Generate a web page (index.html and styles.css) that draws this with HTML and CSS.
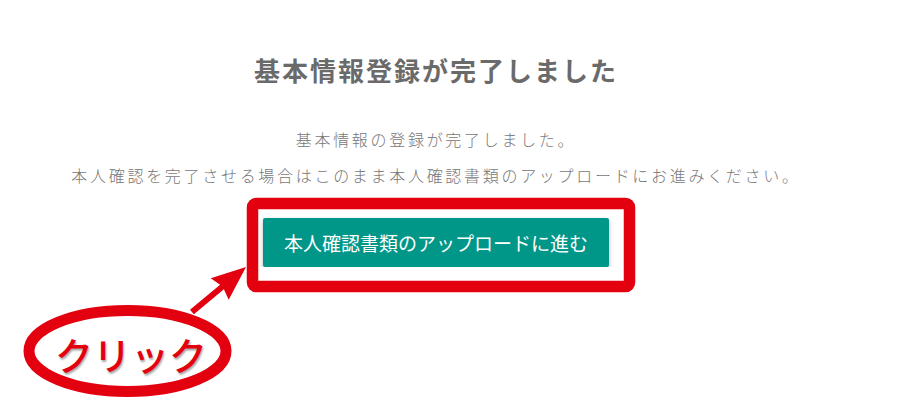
FILE: index.html
```html
<!DOCTYPE html>
<html lang="ja">

<head>
    <meta charset="UTF-8">
    <meta name="viewport" content="width=device-width, initial-scale=1.0">
    <title>基本情報登録が完了しました</title>

    <link rel="stylesheet" href="styles.css">
</head>

<body class="body">
    <div class="page">
        <h1 class="title">基本情報登録が完了しました</h1>

        <div class="message">
            <p>基本情報の登録が完了しました。</p>
            <p>本人確認を完了させる場合はこのまま本人確認書類のアップロードにお進みください。</p>
        </div>

        <button class="next-button">本人確認書類のアップロードに進む</button>
    </div>

    <!-- annotation layer drawn over the screenshot -->
    <svg class="marks" width="900" height="420" viewBox="0 0 900 420">
        <rect x="252.5" y="203.5" width="377" height="83" rx="4" fill="none" stroke="#e3000f" stroke-width="11.5" />
        <ellipse cx="127.5" cy="351" rx="98.5" ry="40.5" fill="none" stroke="#e3000f" stroke-width="11" />
        <polygon points="190,309.7 220.1,284.7 210.7,278.2 246,267 228.7,299.7 223.9,289.3 193.9,314.3" fill="#e3000f" />
    </svg>
    <div class="click-label">クリック</div>
</body>

</html>
```

FILE: styles.css
```css
body {
    margin: 0;
    background: #fff;
    font-family: "Noto Sans CJK JP", "Noto Sans", sans-serif;
}

.page {
    display: flex;
    flex-direction: column;
    align-items: center;
    padding: 53px 28px 0 0;
    text-align: center;
}

.title {
    margin: 0;
    font-size: 26px;
    line-height: 34px;
    font-weight: bold;
    letter-spacing: 2px;
    color: #6a6a6a;
}

.message {
    margin-top: 34px;
    color: #777;
    font-size: 16px;
    font-weight: 300;
    letter-spacing: 2.7px;
}

.message p {
    margin: 0;
    line-height: 36px;
}

.next-button {
    margin-top: 25px;
    height: 49px;
    padding: 0 21px;
    font-family: inherit;
    font-size: 19px;
    color: #fff;
    background-color: #009688;
    border: none;
    border-radius: 2px;
    box-shadow: 0 2px 4px rgba(0, 0, 0, 0.3);
    cursor: pointer;
}

.marks {
    position: absolute;
    top: 0;
    left: 0;
    pointer-events: none;
}

.click-label {
    position: absolute;
    left: 55px;
    top: 334px;
    font-size: 38px;
    line-height: 40px;
    font-weight: 500;
    color: #e3000f;
    -webkit-text-stroke: 5px #fff;
    paint-order: stroke fill;
    text-shadow: 1px 2px 2px rgba(0, 0, 0, 0.35);
}
```
